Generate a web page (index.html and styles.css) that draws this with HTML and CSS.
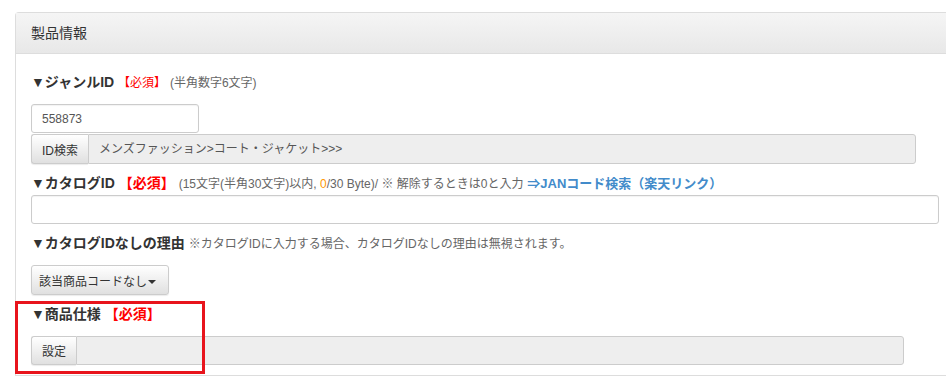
FILE: index.html
```html
<!DOCTYPE html>
<html lang="ja">
<head>
    <meta charset="UTF-8">
    <meta name="viewport" content="width=device-width, initial-scale=1.0">
    <title>製品情報</title>
    <link rel="stylesheet" href="styles.css">
</head>
<body>
    <div class="panel">
        <div class="panel-heading">製品情報</div>
        <div class="panel-body">
            <div class="field">
                <div class="label">▼ジャンルID <span class="req">【必須】</span> <span class="note">(半角数字6文字)</span></div>
                <input type="text" class="input input-short" value="558873">
                <div class="group">
                    <button type="button" class="btn btn-left">ID検索</button>
                    <div class="addon">メンズファッション&gt;コート・ジャケット&gt;&gt;&gt;</div>
                </div>
            </div>

            <div class="field">
                <div class="label">▼カタログID <span class="req req-bold">【必須】</span> <span class="note">(15文字(半角30文字)以内, <span class="count">0</span>/30 Byte)/ ※ 解除するときは0と入力</span> <a class="link" href="#">⇒JANコード検索（楽天リンク）</a></div>
                <input type="text" class="input input-full">
            </div>

            <div class="field">
                <div class="label">▼カタログIDなしの理由 <span class="note">※カタログIDに入力する場合、カタログIDなしの理由は無視されます。</span></div>
                <button type="button" class="btn btn-drop">該当商品コードなし<span class="caret"></span></button>
            </div>

            <div class="field field-spec">
                <div class="label">▼商品仕様 <span class="req req-bold">【必須】</span></div>
                <div class="group group-spec">
                    <button type="button" class="btn btn-left">設定</button>
                    <div class="addon"></div>
                </div>
                <div class="highlight"></div>
            </div>
        </div>
        <div class="table-top">
            <div class="cell cell-a"></div>
            <div class="cell cell-b"></div>
            <div class="cell"></div>
        </div>
    </div>
</body>
</html>
```

FILE: styles.css
```css
body {
    margin: 0;
    font-family: "Liberation Sans", "Noto Sans CJK JP", sans-serif;
    color: #333;
    background-color: #fff;
    overflow: hidden;
}

.panel {
    margin: 12px -20px 0 15px;
    border: 1px solid #ddd;
    border-right: none;
    border-radius: 4px 0 0 0;
}

.panel-heading {
    height: 40px;
    line-height: 40px;
    padding-left: 15px;
    font-size: 14px;
    color: #333;
    background: linear-gradient(to bottom, #f5f5f5, #e8e8e8);
    border-bottom: 1px solid #ddd;
}

.panel-body {
    padding: 18px 15px 0 15px;
}

.field {
    position: relative;
    margin-bottom: 9px;
}

.label {
    font-size: 14px;
    font-weight: bold;
    line-height: 20px;
    height: 20px;
    white-space: nowrap;
    color: #333;
}

.req {
    color: #f00;
    font-size: 12px;
    font-weight: normal;
}

.req-bold {
    font-size: 14px;
    font-weight: bold;
}

.note {
    color: #666;
    font-size: 12px;
    font-weight: normal;
}

.count {
    color: #f90;
}

.link {
    color: #428bca;
    font-size: 13px;
    font-weight: bold;
    text-decoration: none;
}

.input {
    display: block;
    box-sizing: border-box;
    height: 29px;
    padding: 0 10px;
    font-family: "Liberation Sans", "Noto Sans CJK JP", sans-serif;
    font-size: 12px;
    color: #555;
    border: 1px solid #ccc;
    border-radius: 3px;
    box-shadow: inset 0 1px 1px rgba(0, 0, 0, 0.05);
    background-color: #fff;
}

.input-short {
    width: 168px;
    margin-top: 12px;
}

.input-full {
    width: 908px;
    height: 29px;
    margin-top: 2px;
}

.group {
    display: flex;
    width: 885px;
    height: 30px;
    margin-top: 1px;
}

.group-spec {
    width: 873px;
    height: 29px;
    margin-top: 12px;
}

.btn {
    box-sizing: border-box;
    font-family: "Liberation Sans", "Noto Sans CJK JP", sans-serif;
    font-size: 12px;
    color: #333;
    padding: 0 10px;
    border: 1px solid #ccc;
    border-radius: 3px;
    background: linear-gradient(to bottom, #fff, #e0e0e0);
    box-shadow: 0 1px 1px rgba(0, 0, 0, 0.08);
    cursor: pointer;
}

.btn-left {
    height: 100%;
    border-radius: 3px 0 0 3px;
    border-right: none;
}

.addon {
    flex: 1;
    box-sizing: border-box;
    padding-left: 10px;
    line-height: 28px;
    font-size: 12px;
    color: #555;
    background-color: #eee;
    border: 1px solid #ccc;
    border-radius: 0 3px 3px 0;
}

.btn-drop {
    display: block;
    height: 30px;
    width: 138px;
    margin-top: 12px;
    padding: 0 7px;
    text-align: left;
}

.caret {
    display: inline-block;
    width: 0;
    height: 0;
    margin-left: 1px;
    vertical-align: middle;
    border-top: 4px solid #333;
    border-left: 4px solid transparent;
    border-right: 4px solid transparent;
}

.field-spec {
    margin-bottom: 10px;
}

.highlight {
    position: absolute;
    left: -16px;
    top: -3px;
    width: 184px;
    height: 67px;
    border: 3px solid #e8141c;
}

.table-top {
    display: flex;
    height: 30px;
    border-top: 1px solid #ddd;
}

.cell {
    flex: 1;
}

.cell-a {
    flex: 0 0 52px;
    border-right: 1px solid #333;
}

.cell-b {
    flex: 0 0 62px;
    border-right: 1px solid #333;
}
```
